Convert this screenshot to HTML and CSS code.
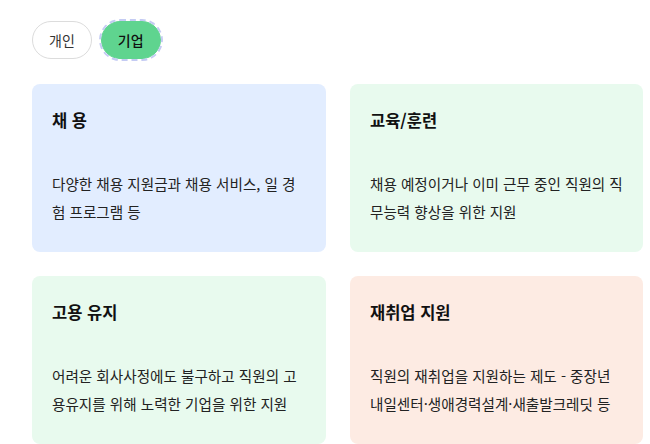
FILE: index.html
```html
<!DOCTYPE html>
<html lang="ko">
<head>
    <meta charset="UTF-8">
    <meta name="viewport" content="width=device-width, initial-scale=1.0">
    <title>지원 제도</title>
    <link rel="stylesheet" href="styles.css">
</head>
<body>
    <div class="tabs">
        <button class="tab">개인</button>
        <button class="tab ativo">기업</button>
    </div>

    <div class="cartoes">
        <div class="cartao azul">
            <h3>채 용</h3>
            <p>다양한 채용 지원금과 채용 서비스, 일 경<br>험 프로그램 등</p>
        </div>
        <div class="cartao verde">
            <h3>교육/훈련</h3>
            <p>채용 예정이거나 이미 근무 중인 직원의 직<br>무능력 향상을 위한 지원</p>
        </div>
        <div class="cartao verde">
            <h3>고용 유지</h3>
            <p>어려운 회사사정에도 불구하고 직원의 고<br>용유지를 위해 노력한 기업을 위한 지원</p>
        </div>
        <div class="cartao rosa">
            <h3>재취업 지원</h3>
            <p>직원의 재취업을 지원하는 제도 - 중장년<br>내일센터·생애경력설계·새출발크레딧 등</p>
        </div>
    </div>
</body>
</html>
```

FILE: styles.css
```css
body {
    font-family: "Noto Sans CJK KR", "Noto Sans", sans-serif;
    margin: 0;
    padding: 21px 32px 0;
    background: #fff;
    color: #222;
}
.tabs {
    display: flex;
    gap: 8px;
    margin-bottom: 25px;
}
.tab {
    height: 38px;
    padding: 0 16px;
    border: 1px solid #dcdcdc;
    border-radius: 19px;
    background: #fff;
    color: #333;
    font-family: inherit;
    font-size: 14px;
    cursor: pointer;
}
.tab.ativo {
    margin-left: 1px;
    background: #5fd48f;
    border-color: #5fd48f;
    color: #111;
    font-weight: 500;
    outline: 2px dashed #c4cbf3;
    outline-offset: 0;
}
.cartoes {
    display: grid;
    grid-template-columns: 294px 293px;
    gap: 24px;
}
.cartao {
    height: 168px;
    box-sizing: border-box;
    padding: 24px 20px 0;
    border-radius: 8px;
}
.cartao h3 {
    margin: 0 0 38px;
    font-size: 16.5px;
    line-height: 24px;
    font-weight: 700;
    color: #111;
}
.cartao p {
    margin: 0;
    font-size: 14.6px;
    line-height: 28px;
    white-space: nowrap;
}
.azul {
    background: #e2edff;
}
.verde {
    background: #e8faee;
}
.rosa {
    background: #fdebe3;
}
```
